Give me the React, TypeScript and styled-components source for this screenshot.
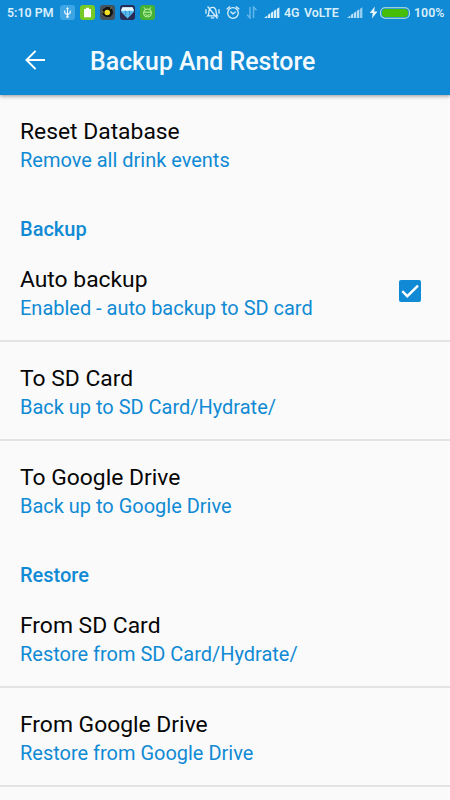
import React from "react";
import styled, { createGlobalStyle } from "styled-components";

const BLUE = "#108ad4";

const GlobalStyle = createGlobalStyle`
  * { box-sizing: border-box; }
  body { margin: 0; background: #fafafa; }
`;

const Screen = styled.div`
  width: 450px;
  height: 800px;
  overflow: hidden;
  display: flex;
  flex-direction: column;
  background: #fafafa;
  font-family: Roboto, "Liberation Sans", sans-serif;
`;

const Header = styled.header`
  flex: none;
  height: 95px;
  background: ${BLUE};
  box-shadow: 0 1px 4px rgba(0, 0, 0, 0.42);
`;

const StatusBar = styled.div`
  height: 25px;
  display: flex;
  align-items: center;
  justify-content: space-between;
  padding: 0 8px 0 7px;
  color: #d8effc;
`;

const StatusGroup = styled.div`
  display: flex;
  align-items: center;
`;

const StatusText = styled.span<{ $width: number; $gap?: number }>`
  width: ${(p) => p.$width}px;
  margin-left: ${(p) => p.$gap ?? 0}px;
  font-size: 12.4px;
  line-height: 25px;
  font-weight: 600;
  white-space: nowrap;
`;

const StatusIcon = styled.svg<{ $gap: number }>`
  display: block;
  flex: none;
  margin-left: ${(p) => p.$gap}px;
`;

const Toolbar = styled.div`
  height: 70px;
  display: flex;
  align-items: center;
  padding-left: 25px;
`;

const BackButton = styled.button`
  width: 20px;
  height: 20px;
  padding: 0;
  border: 0;
  background: none;
  display: flex;
`;

const PageTitle = styled.h1`
  margin: 4px 0 0 45px;
  font-size: 24.9px;
  line-height: 30px;
  font-weight: 500;
  color: #f4fbff;
  white-space: nowrap;
`;

const List = styled.main`
  flex: 1;
`;

const Row = styled.div<{ $divider?: boolean }>`
  height: 99px;
  padding: 21px 29px 0 20px;
  display: flex;
  justify-content: space-between;
  border-bottom: ${(p) => (p.$divider ? "2px solid #e3e3e3" : "0")};
`;

const RowTitle = styled.div`
  font-size: 22.85px;
  line-height: 31px;
  color: #060606;
`;

const RowSummary = styled.div`
  font-size: 19.98px;
  line-height: 26px;
  color: ${BLUE};
`;

const SectionTitle = styled.h2`
  height: 49px;
  margin: 0;
  padding: 22px 20px 0;
  font-size: 20px;
  line-height: 26px;
  font-weight: 500;
  color: ${BLUE};
`;

const Checkbox = styled.span`
  width: 22px;
  height: 22px;
  margin-top: 16px;
  border-radius: 2px;
  background: ${BLUE};
  display: flex;
`;

const INK = "#d8effc";

const UsbIcon = () => (
  <StatusIcon $gap={7} width="15" height="15" viewBox="0 0 15 15">
    <rect width="15" height="15" rx="3" fill="#3fa6e6" />
    <path d="M7.5 3v9M4.7 5.5v2.3L7.5 10M10.3 5.5v2.3L7.5 10" fill="none" stroke="#eef9ff" strokeWidth="1.1" />
    <path d="M7.5 2l1.5 2H6z" fill="#eef9ff" />
    <circle cx="7.5" cy="11.7" r="1.2" fill="#eef9ff" />
  </StatusIcon>
);

const BatteryAppIcon = () => (
  <StatusIcon $gap={5} width="15" height="15" viewBox="0 0 15 15">
    <rect width="15" height="15" rx="3" fill="#76ca26" />
    <path d="M6 2.8h3V4h2v8.2H4V4h2z" fill="#fff" />
  </StatusIcon>
);

const SunAppIcon = () => (
  <StatusIcon $gap={5} width="15" height="15" viewBox="0 0 15 15">
    <rect width="15" height="15" rx="3" fill="#46525b" />
    <path d="M3 4l2-1 1-1h3l2 1 1.5 2 .5 3-1 2-2 2H6l-3-2-1-3z" fill="#11130f" />
    <circle cx="7.3" cy="7.5" r="2.8" fill="#f2df26" />
    <path d="M2 6.5l1.5 .8M10.5 3.5l1 -.7" stroke="#d6b52b" />
  </StatusIcon>
);

const HydrateIcon = () => (
  <StatusIcon $gap={5} width="15" height="15" viewBox="0 0 15 15">
    <rect width="15" height="15" rx="3" fill="#292b55" />
    <path d="M1 5.3L2.5 2.2h10L14 5.3v1.5L7.5 13.5 1 6.8z" fill="#58b9ec" />
    <path d="M1 5.3L2.5 2.2h10L14 5.3l-2 .6-2.3-.5-2.2.6-2.3-.6-2.2.5z" fill="#e7f8ff" />
    <path d="M5.5 6v4M9.5 6v4" stroke="#2589ce" strokeWidth=".8" />
  </StatusIcon>
);

const DroidIcon = () => (
  <StatusIcon $gap={5} width="15" height="15" viewBox="0 0 15 15">
    <rect width="15" height="15" rx="3" fill="#45b236" />
    <g fill="none" stroke="#c7f7ab" strokeWidth="1">
      <circle cx="7.5" cy="8" r="4" />
      <path d="M4 2.3l1.5 2M11 2.3l-1.5 2M4 7.2h7M5.5 9.5l2 1 2-1" />
    </g>
  </StatusIcon>
);

const MutedIcon = () => (
  <StatusIcon $gap={0} width="15" height="15" viewBox="0 0 15 15">
    <g fill="none" stroke={INK} strokeWidth="1.3">
      <path d="M2.6 10.9c1.3-1.2 1.2-2.5 1.3-4.4C4.1 3.8 5.3 2.4 7.5 2.4s3.4 1.4 3.6 4.1c.1 1.9 0 3.2 1.3 4.4zM5.8 12.9h3.4M2.6 1.5l10 12.2M1 4.2v4.6M14 4.2v4.6" />
    </g>
  </StatusIcon>
);

const AlarmIcon = () => (
  <StatusIcon $gap={6} width="14" height="15" viewBox="0 0 14 15">
    <g fill="none" stroke={INK} strokeWidth="1.3">
      <circle cx="7" cy="8" r="5.3" />
      <path d="M.7 4.2L4 1.4M13.3 4.2L10 1.4M4.4 6.5L7 8.8l2.7-2" />
    </g>
  </StatusIcon>
);

const DataIcon = () => (
  <StatusIcon $gap={6} width="12" height="13" viewBox="0 0 12 13">
    <path d="M4 1v11L1.2 8.8M7.5 12V1l3 3.2" fill="none" stroke="#64b7e8" strokeWidth="1.5" />
  </StatusIcon>
);

const SignalIcon = ({ gap, weak }: { gap: number; weak?: boolean }) => (
  <StatusIcon $gap={gap} width="16" height="11" viewBox="0 0 16 11">
    <path d="M0 11l3.4-2.6V11zM4 7.8l2.3-1.5V11H4zM7 5.8l2.3-1.5V11H7zM10 3.8l2.3-1.5V11H10z" fill={weak ? "#b5dff6" : INK} />
    <path d="M13 1.8L15.4 .2V11H13z" fill={weak ? "#92cdef" : INK} />
  </StatusIcon>
);

const BoltIcon = () => (
  <StatusIcon $gap={6} width="9" height="13" viewBox="0 0 9 13">
    <path d="M5.8 .5L.7 7h3L3 12.5 8.5 5.4H5.2z" fill="#e7f7ff" />
  </StatusIcon>
);

const ChargeIcon = () => (
  <StatusIcon $gap={2} width="30" height="12" viewBox="0 0 30 12">
    <rect x=".6" y=".8" width="28.8" height="10.4" rx="4.5" fill={BLUE} stroke="#c3e8d9" strokeWidth="1.1" />
    <rect x="2" y="2.1" width="26" height="7.8" rx="3.5" fill="#46bd08" />
  </StatusIcon>
);

interface PreferenceProps {
  title: string;
  summary: string;
  divider?: boolean;
  checked?: boolean;
}

const Preference = ({ title, summary, divider, checked }: PreferenceProps) => (
  <Row $divider={divider}>
    <div>
      <RowTitle>{title}</RowTitle>
      <RowSummary>{summary}</RowSummary>
    </div>
    {checked && (
      <Checkbox role="checkbox" aria-checked="true">
        <svg width="22" height="22" viewBox="0 0 22 22">
          <path d="M3.3 11.2l5 5L19 5.6" fill="none" stroke="#fff" strokeWidth="2.4" />
        </svg>
      </Checkbox>
    )}
  </Row>
);

export default function App() {
  return (
    <Screen>
      <GlobalStyle />
      <Header>
        <StatusBar>
          <StatusGroup>
            <StatusText $width={46}>5:10 PM</StatusText>
            <UsbIcon />
            <BatteryAppIcon />
            <SunAppIcon />
            <HydrateIcon />
            <DroidIcon />
          </StatusGroup>
          <StatusGroup>
            <MutedIcon />
            <AlarmIcon />
            <DataIcon />
            <SignalIcon gap={6} />
            <StatusText $width={16} $gap={4}>4G</StatusText>
            <StatusText $width={37} $gap={4}>VoLTE</StatusText>
            <SignalIcon gap={6} weak />
            <BoltIcon />
            <ChargeIcon />
            <StatusText $width={28} $gap={4}>100%</StatusText>
          </StatusGroup>
        </StatusBar>
        <Toolbar>
          <BackButton aria-label="Back">
            <svg width="20" height="20" viewBox="0 0 20 20">
              <path d="M20 10H1.8M10.6 .9L1.5 10l9.1 9.1" fill="none" stroke="#fff" strokeWidth="2" />
            </svg>
          </BackButton>
          <PageTitle>Backup And Restore</PageTitle>
        </Toolbar>
      </Header>
      <List>
        <Preference title="Reset Database" summary="Remove all drink events" />
        <SectionTitle>Backup</SectionTitle>
        <Preference title="Auto backup" summary="Enabled - auto backup to SD card" divider checked />
        <Preference title="To SD Card" summary="Back up to SD Card/Hydrate/" divider />
        <Preference title="To Google Drive" summary="Back up to Google Drive" />
        <SectionTitle>Restore</SectionTitle>
        <Preference title="From SD Card" summary="Restore from SD Card/Hydrate/" divider />
        <Preference title="From Google Drive" summary="Restore from Google Drive" divider />
      </List>
    </Screen>
  );
}
